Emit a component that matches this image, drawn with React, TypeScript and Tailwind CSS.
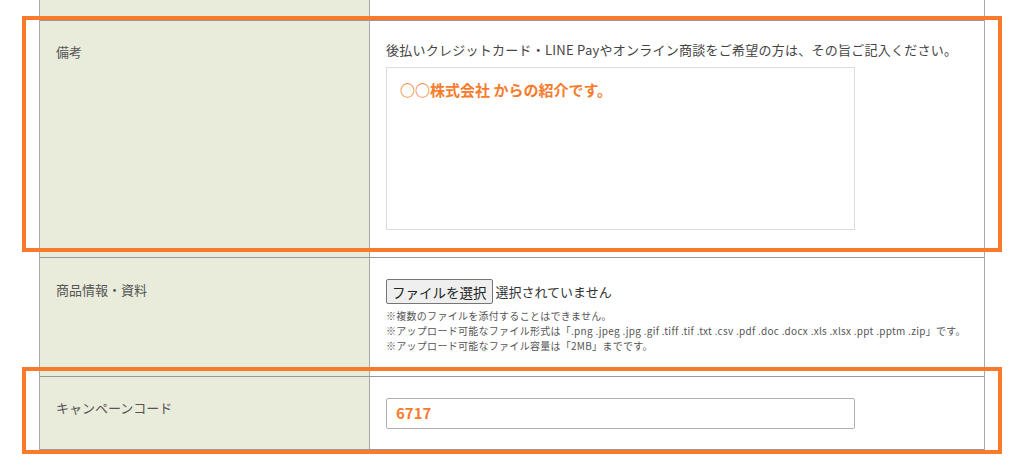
import React from 'react';

const jp = { fontFamily: '"Noto Sans CJK JP", "Noto Sans", sans-serif' };

export default function App() {
  return (
    <div className="relative w-[1024px] h-[469px] overflow-hidden bg-white" style={jp}>
      <div className="ml-[39px] w-[946px] border-l border-r border-[#a8a8a8]">
        {/* tail of previous row */}
        <div className="flex h-[20px]">
          <div className="w-[330px] bg-[#e9ebdb] border-r border-[#a8a8a8]" />
          <div className="flex-1" />
        </div>

        {/* 備考 */}
        <div className="flex h-[237px] border-t border-[#999]">
          <div className="w-[330px] bg-[#e9ebdb] border-r border-[#a8a8a8] pt-[21px] pl-[16px] text-[13px] leading-[20px] text-[#555]">
            備考
          </div>
          <div className="flex-1 pt-[19px] pl-[16px]">
            <p className="text-[13px] leading-[20px] tracking-[0.25px] text-[#444] whitespace-nowrap">
              後払いクレジットカード・LINE Payやオンライン商談をご希望の方は、その旨ご記入ください。
            </p>
            <div className="mt-[7px] w-[469px] h-[163px] border border-[#dcdcdc] px-[13px] pt-[9px]">
              <span className="text-[15px] leading-[22px] font-bold text-[#f77b2c]">
                ○○株式会社 からの紹介です。
              </span>
            </div>
          </div>
        </div>

        {/* 商品情報・資料 */}
        <div className="flex h-[119px] border-t border-[#999]">
          <div className="w-[330px] bg-[#e9ebdb] border-r border-[#a8a8a8] pt-[22px] pl-[16px] text-[13px] leading-[20px] text-[#555]">
            商品情報・資料
          </div>
          <div className="flex-1 pt-[21px] pl-[16px]">
            <div className="flex items-center gap-[3px]">
              <button className="h-[25px] px-[5px] bg-[#efefef] border border-[#767676] rounded-[2px] text-[13.5px] leading-[20px] text-[#222]">
                ファイルを選択
              </button>
              <span className="text-[13px] text-[#333]">選択されていません</span>
            </div>
            <div className="mt-[4px] text-[10px] leading-[15px] tracking-[0.28px] text-[#555] whitespace-nowrap">
              <p>※複数のファイルを添付することはできません。</p>
              <p>※アップロード可能なファイル形式は「.png .jpeg .jpg .gif .tiff .tif .txt .csv .pdf .doc .docx .xls .xlsx .ppt .pptm .zip」です。</p>
              <p>※アップロード可能なファイル容量は「2MB」までです。</p>
            </div>
          </div>
        </div>

        {/* キャンペーンコード */}
        <div className="flex h-[74px] border-t border-b border-[#999]">
          <div className="w-[330px] bg-[#e9ebdb] border-r border-[#a8a8a8] pt-[21px] pl-[16px] text-[13px] leading-[20px] text-[#555]">
            キャンペーンコード
          </div>
          <div className="flex-1 pt-[21px] pl-[16px]">
            <div className="w-[469px] h-[31px] border border-[#b0b0b0] rounded-[2px] flex items-center px-[9px]">
              <span className="text-[15px] font-bold text-[#f77b2c]">6717</span>
            </div>
          </div>
        </div>
      </div>

      {/* highlight frames */}
      <div className="absolute left-[22px] top-[16px] w-[980px] h-[236px] border-4 border-[#fa7a2c]" />
      <div className="absolute left-[22px] top-[367px] w-[980px] h-[87px] border-4 border-[#fa7a2c]" />
    </div>
  );
}
